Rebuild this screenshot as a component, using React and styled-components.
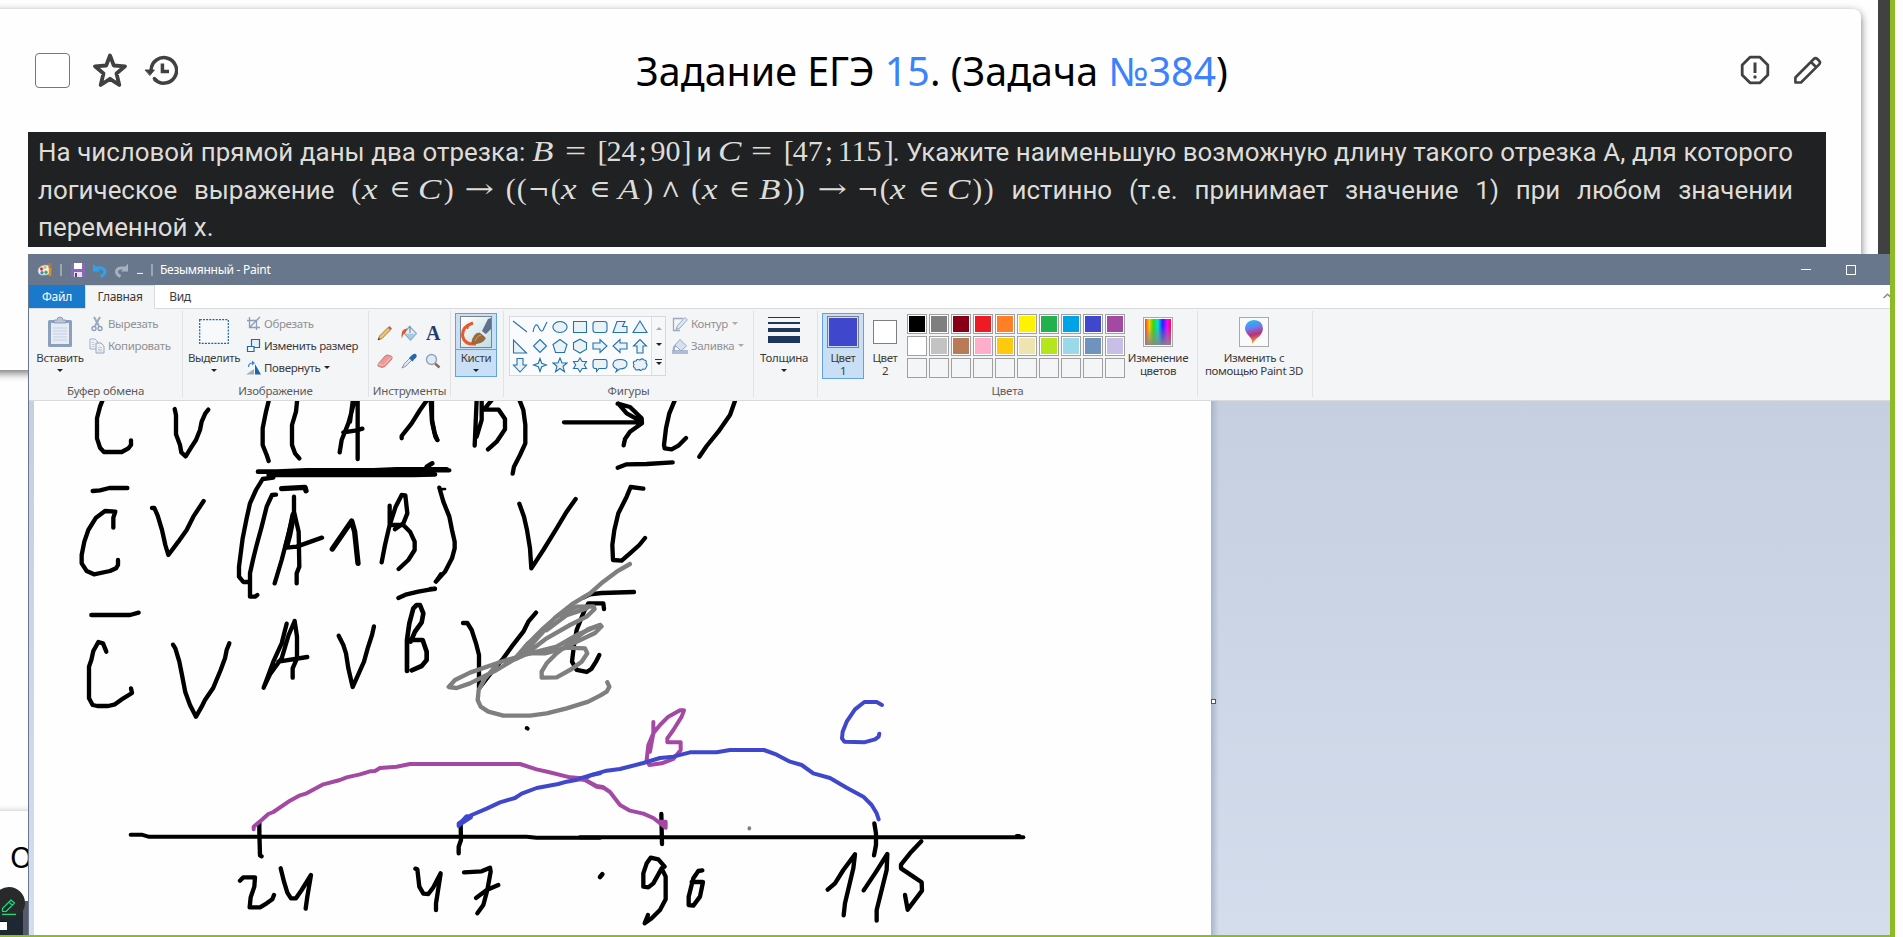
import React from 'react';
import styled, { createGlobalStyle } from 'styled-components';

const Global = createGlobalStyle`
  * { box-sizing: border-box; }
  body { margin: 0; background: #fefefe; overflow: hidden; font-family: "Noto Sans", "Open Sans", sans-serif; }
  svg { display: block; flex: none; }
`;

/* ---------- screen ---------- */
const Screen = styled.div`
  width: 1903px; height: 937px; overflow: hidden; background: #fefefe;
`;
const Shared = styled.div`
  width: 1895px; height: 937px; border-right: 5px solid #8dbb25; border-bottom: 2px solid #8dbb25;
  position: relative; overflow: hidden;
`;
const Page = styled.div`
  display: flex; height: 935px; background: #fefefe;
`;
const Content = styled.div`
  width: 1878px; overflow: hidden; display: flex; flex-direction: column; padding-top: 9px;
`;
const Scrollbar = styled.div`
  width: 12px; background: #414141;
`;
const Card = styled.section`
  width: 1881px; margin-left: -20px; flex: none; height: ${p => p.$h}px; margin-bottom: ${p => p.$gap || 0}px;
  border-radius: 8px; background: #fefefe;
  box-shadow: 0 3px 8px rgba(0,0,0,.55);
`;
const CardHead = styled.header`
  display: flex; align-items: center; height: 123px; padding: 0 38px 0 55px;
`;
const HeadIcons = styled.div`
  display: flex; align-items: center; gap: ${p => p.$gap}px; height: 35px; margin-top: -1px;
`;
const CheckBox = styled.span`
  width: 35px; height: 35px; border: 1.5px solid #777; border-radius: 4px; background: #fff; margin-right: 6px;
`;
const Title = styled.h1`
  flex: 1; margin: 0 54px 0 0; text-align: center; font-weight: 400; font-size: 39.4px; line-height: 52px; color: #000;
  white-space: nowrap;
`;
const Link = styled.a` color: #3b82ff; `;

const Problem = styled.div`
  width: 1798px; height: 115px; margin-left: 48px; background: #1f2122; color: #dedcd8;
  padding: 1px 33px 0 10px; font-family: Roboto, sans-serif; font-size: 25.9px;
`;
const Line = styled.div`
  height: ${p => p.$h}px; line-height: ${p => p.$h}px; white-space: nowrap; overflow: visible;
  text-align: justify; text-align-last: ${p => (p.$last ? 'left' : 'justify')};
`;
const Formula = styled.span`
  display: inline-flex; height: 36px; line-height: 36px; vertical-align: baseline; text-align-last: left;
  font-family: "Liberation Serif", serif; font-size: 30px;
`;
const Glyph = styled.span`
  width: ${p => p.$w}px; white-space: nowrap; transform-origin: 0 50%;
  ${p => p.$kind === 'v' && 'font-style: italic; transform: scaleX(1.17);'}
  ${p => p.$kind === 'e' && 'transform: scaleX(1.25);'}
  ${p => p.$kind === 'o' && 'font-family: "DejaVu Math TeX Gyre", "DejaVu Sans", serif; font-size: 24px;'}
  ${p => p.$kind === 'a' && 'font-family: "DejaVu Math TeX Gyre", "DejaVu Sans", serif; font-size: 24px; transform: scaleX(1.3);'}
`;

const formulaB = [['B', 33.5, 'v'], ['=', 32, 'e'], ['[', 9], ['24', 32], [';', 12], ['90', 31], [']', 8.5]];
const formulaC = [['C', 33, 'v'], ['=', 32.5, 'e'], ['[', 9], ['47', 32], [';', 13], ['115', 46], [']', 9]];
const formulaX = [
  ['(', 11], ['x', 28, 'v'], ['∈', 28, 'o'], ['C', 25.5, 'v'], [')', 20], ['→', 42, 'a'],
  ['(', 11], ['(', 12], ['¬', 22, 'o'], ['(', 10.5], ['x', 29, 'v'], ['∈', 28, 'o'], ['A', 25, 'v'], [')', 18], ['∧', 30, 'o'],
  ['(', 10.5], ['x', 28, 'v'], ['∈', 29, 'o'], ['B', 24.5, 'v'], [')', 11.5], [')', 22], ['→', 41, 'a'],
  ['¬', 22, 'o'], ['(', 10.5], ['x', 29, 'v'], ['∈', 28, 'o'], ['C', 25, 'v'], [')', 11.5], [')', 11],
];
const Expression = ({ parts }) => (
  <Formula>{parts.map(([t, w, k], i) => <Glyph key={i} $w={w} $kind={k}>{t}</Glyph>)}</Formula>
);

/* floating draw button in the corner */
const Answer = styled.div` padding: 26px 0 0 30px; font-size: 29.5px; line-height: 40px; height: 90px; color: #000; `;
const Dock = styled.div`
  width: 48px; height: 34px; background: #1e2832; border-right: 5px solid #545b66; padding: 20px 0 0 20px;
`;
const DockChip = styled.span` display: block; width: 7px; height: 9px; background: #fff; border-top: 1px solid #111; `;
const DrawButton = styled.button`
  position: absolute; left: -7px; top: 887px; width: 32px; height: 32px; border: 0; border-radius: 50%;
  background: #28292b; padding: 8px 0 0 8px;
`;

/* ---------- paint window ---------- */
const Window = styled.div`
  position: absolute; left: 28px; top: 254px; width: 1862px; height: 681px; border-left: 1px solid #68778b;
  display: flex; flex-direction: column; font-size: 11.5px; letter-spacing: -.35px; color: #3b3b3b; background: #f4f5f7;
`;
const TitleBar = styled.div`
  height: 31px; background: #68778b; color: #fff; display: flex; align-items: center; padding-left: 8px;
`;
const QuickIcon = styled.span` width: ${p => p.$w}px; display: flex; `;
const WinTitle = styled.span` flex: 1; font-size: 12px; line-height: 30px; letter-spacing: -.27px; `;
const Controls = styled.span` display: flex; align-items: center; gap: 35px; padding-right: 34px; `;
const MinGlyph = styled.i` width: 10px; height: 1px; background: #fff; `;
const MaxGlyph = styled.i` width: 10px; height: 10px; border: 1px solid #fff; `;
const Tabs = styled.div`
  height: 24px; background: #fff; border-bottom: 1px solid #d9dadb; display: flex; font-size: 12px; letter-spacing: -.3px;
`;
const Tab = styled.div`
  height: ${p => (p.$kind === 'active' ? 24 : 23)}px; width: ${p => p.$w}px; line-height: 24px; text-align: center;
  background: ${p => ({ file: '#1979ca', active: '#f4f5f7' }[p.$kind] || 'transparent')};
  color: ${p => (p.$kind === 'file' ? '#fff' : '#3b3b3b')};
  ${p => p.$kind === 'active' && 'border: 1px solid #dadbdc; border-bottom: 0; line-height: 22px;'}
`;
const Collapse = styled.span` margin-left: auto; padding-top: 8px; width: 7px; overflow: hidden; `;
const Ribbon = styled.div`
  height: 92px; border-bottom: 1px solid #d9dadb; background: #f4f5f7; display: flex; padding-top: 2px;
`;
const Group = styled.div`
  width: ${p => p.$w}px; height: 86px; border-right: 1px solid #e0e2e4; display: flex; flex-direction: column; flex: none;
`;
const Body = styled.div` height: 72px; display: flex; padding-left: ${p => p.$pl || 0}px; `;
const GroupLabel = styled.div` text-align: center; line-height: 15px; height: 14px; color: #5c5c5c; white-space: nowrap; letter-spacing: -.2px; `;
const Big = styled.div`
  width: ${p => p.$w}px; height: ${p => p.$h || 66}px; margin-top: 2px; display: flex; flex-direction: column; align-items: center; flex: none;
  white-space: nowrap; line-height: 13px; text-align: center;
  ${p => p.$on && 'background: #c9dff5; border: 1px solid #62a2e4;'}
`;
const BigPic = styled.div`
  height: ${p => (p.$on ? 36 : 37)}px; display: flex; align-items: center; justify-content: center; align-self: stretch;
  ${p => p.$split && 'border-bottom: 1px solid #62a2e4;'}
`;
const BigText = styled.div` padding-top: 1px; white-space: pre; `;
const Down = styled.i`
  width: 0; height: 0; border: 3px solid transparent; border-top: 3px solid ${p => p.$c || '#222'}; border-bottom: 0;
  margin: ${p => p.$m || '5px 0 0'};
`;
const List = styled.div` display: flex; flex-direction: column; padding-left: ${p => p.$pl}px; padding-top: 2px; `;
const Cmd = styled.div`
  height: 22px; display: flex; align-items: center; white-space: nowrap; line-height: 14px; padding-bottom: 1px;
  color: ${p => (p.$off ? '#909194' : '#3b3b3b')};
`;
const CmdIcon = styled.span` width: ${p => p.$w || 17}px; display: flex; `;
const ToolGrid = styled.div`
  display: grid; grid-template-columns: repeat(3, 24px); grid-auto-rows: 28px; padding: 8px 0 0 4px; align-items: center; justify-items: center;
`;
const ShapeBox = styled.div`
  width: 157px; height: 60px; margin-top: 5px; border: 1px solid #d6dade; background: #fafbfc; display: flex; flex: none;
`;
const ShapeGrid = styled.div`
  width: 142px; display: grid; grid-template-columns: repeat(7, 20px); grid-auto-rows: 19.3px; align-items: center; justify-items: center;
  border-right: 1px solid #dcdfe3;
`;
const ShapeScroll = styled.div`
  width: 13px; display: flex; flex-direction: column; align-items: center; background: #f6f7f8; justify-content: space-around; padding: 3px 0;
`;
const UpArrow = styled.i` width: 0; height: 0; border: 3px solid transparent; border-bottom: 3px solid #aaa; border-top: 0; `;
const MoreArrow = styled.span` border-top: 1px solid #333; padding-top: 2px; width: 7px; display: flex; justify-content: center; `;
const Bars = styled.div` width: 32px; display: flex; flex-direction: column; `;
const Bar = styled.i` height: ${p => p.$h}px; margin-bottom: 4px; background: #1f365c; `;
const Swatch = styled.div`
  width: ${p => p.$s}px; height: ${p => p.$s}px; border: 1px solid ${p => p.$b || '#7f7f7f'}; background: ${p => p.$c};
  box-shadow: inset 0 0 0 1px ${p => p.$in || '#fff'};
`;
const Palette = styled.div`
  display: grid; grid-template-columns: repeat(10, 20px); grid-auto-rows: 20px; gap: 2px; margin: 3px 0 0 1px; width: 218px; height: 64px; flex: none;
`;
const Framed = styled.div`
  width: 30px; height: 30px; border: 1px solid #a9a9a9; background: #fafafa; padding: 1px; display: flex;
`;
const Spectrum = styled.div`
  flex: 1; background: linear-gradient(to bottom, rgba(136,136,136,0) 25%, rgba(136,136,136,.9)), linear-gradient(to right, #f33, #fc0 16%, #3d0 32%, #0dd 50%, #22f 68%, #f0f 86%, #f04);
`;
const Work = styled.div`
  flex: 1; display: flex; padding-left: 5px; background: linear-gradient(#c5cfe0, #d4ddec);
`;
const Canvas = styled.div` width: 1177px; height: 534px; background: #fefefe; `;
const Edge = styled.div` width: 8px; background: linear-gradient(to right, #a9b6cb, transparent); position: relative; `;
const Handle = styled.i`
  position: absolute; left: 0; top: 298px; width: 5px; height: 5px; background: #fff; border: 1px solid #555;
`;

/* ---------- small icons ---------- */
const I = ({ w = 16, h = w, vb, children, ...r }) => (
  <svg width={w} height={h} viewBox={vb || `0 0 ${w} ${h}`} fill="none" {...r}>{children}</svg>
);
const StarIcon = () => (
  <I w={36} stroke="#414141" strokeWidth="3.8" strokeLinejoin="round">
    <path d="M18 3.5 L21.8 13.5 L33 14.3 L24.5 21.5 L27.3 33 L18 26.8 L8.7 33 L11.5 21.5 L3 14.3 L14.2 13.5 Z" />
  </I>
);
const HistoryIcon = () => (
  <I w={34} vb="0 0 36 36" stroke="#414141" strokeWidth="3.7" strokeLinecap="round">
    <path d="M7.5 18 A13.5 13.5 0 1 1 11 27.5" strokeLinecap="butt" /><path d="M11 27 a13 13 0 0 0 2 2" />
    <path d="M1.5 18 h9.5 l-4.6 5.5z" fill="#414141" strokeWidth="1" /><path d="M19.5 11 v8.5 h7" strokeLinecap="butt" />
  </I>
);
const AlertIcon = () => (
  <I w={30} stroke="#414141" strokeWidth="2.8">
    <path d="M10 2.2 H20 L27.8 10 V20 L20 27.8 H10 L2.2 20 V10 Z" strokeLinejoin="round" /><path d="M15 7.5 V18" strokeWidth="3" />
    <circle cx="15" cy="22" r="1.7" fill="#414141" stroke="none" />
  </I>
);
const EditIcon = () => (
  <I w={30} stroke="#414141" strokeWidth="2.6" strokeLinejoin="round">
    <path d="M2.4 27.5 V22.5 L20.8 4 Q22.5 2.2 24.3 4 L26.3 6 Q27.8 7.6 26.2 9.3 L8 27.5 Z M18 7 L23.3 12.2" />
  </I>
);

const quick = {
  app: <I><path d="M1 9 Q1 4 8 3 Q15 3 14 8 Q14 13 8 13 Q1 14 1 9" fill="#e9f1f6" stroke="#8faab8" strokeWidth=".6" /><circle cx="4.5" cy="7" r="1.7" fill="#d64538" /><circle cx="8" cy="5.2" r="1.5" fill="#e8b73c" /><circle cx="5" cy="10.7" r="1.6" fill="#3b82c9" /><circle cx="9" cy="10.3" r="1.7" fill="#49a94f" /><path d="M13 6 V14" stroke="#e48a23" strokeWidth="2.4" /><path d="M13 1 V6" stroke="#b57b3c" strokeWidth="3" /></I>,
  save: <I><path d="M1 1 H15 V15 H1Z" fill="#8a68b3" /><path d="M4 1 H12 V7 H4Z" fill="#fff" /><path d="M4 10 H12 V15 H4Z" fill="#e4def0" /><path d="M6 11 v4" stroke="#5d3d87" strokeWidth="2" /></I>,
  undo: <I><path d="M4 6 H9 Q13 6.5 13 10 Q12.5 13 8.5 14.5" stroke="#2fa2ec" strokeWidth="3" /><path d="M1 1.5 V9.5 H8Z" fill="#2fa2ec" /></I>,
  redo: <I><path d="M12 6 H8 Q3.5 6.5 3.5 10 Q4 13 7.5 14.5" stroke="#a5b1c1" strokeWidth="3" /><path d="M15 1.5 V9.5 H8Z" fill="#a5b1c1" /></I>,
  sep: <I w={2} h={12}><path d="M1 0V12" stroke="#b5bcc5" strokeWidth="1.4" /></I>,
  more: <I w={8}><path d="M1 7.5H7" stroke="#e9ecef" strokeWidth="1.2" /><path d="M.5 9.5H7.5L4 13.5Z" fill="#111" stroke="#e9ecef" strokeWidth=".6" /></I>,
};

const PasteIcon = () => <I w={26} h={32}><rect x="1" y="4" width="24" height="27" rx="1.5" fill="#8c9fbe" /><rect x="4" y="7" width="18" height="21" fill="#e6ecf5" /><path d="M6 12H20M6 15H20M6 18H20M6 21H20M6 24H20" stroke="#c3cfe1" /><path d="M7 7V4H10Q10 1 13 1Q16 1 16 4H19V7Z" fill="#b9c6da" stroke="#8193b1" strokeWidth=".8" /></I>;
const CutIcon = () => <I><path d="M5 1 L10 10 M11 1 L6 10" stroke="#9ba9bf" strokeWidth="2" /><circle cx="5" cy="12.5" r="2" stroke="#8fa0ba" strokeWidth="1.4" /><circle cx="11" cy="12.5" r="2" stroke="#8fa0ba" strokeWidth="1.4" /></I>;
const CopyIcon = () => <I><path d="M1 1 H6 L9 4 V11 H1Z" fill="#eef1f6" stroke="#a3b0c6" /><path d="M7 5 H12 L15 8 V15 H7Z" fill="#eef1f6" stroke="#97a6bf" /><path d="M3 4.5H5M3 6.5H5.5M3 8.5H5.5M9 9.5H13M9 11.5H13M9 13H13" stroke="#b6c1d3" strokeWidth=".8" /></I>;
const SelectIcon = () => <I w={30} h={25}><rect x=".7" y=".7" width="28.6" height="23.6" fill="#f7f9fb" stroke="#1466ae" strokeWidth="1.2" strokeDasharray="2 1.2" /></I>;
const CropIcon = () => <I><path d="M3.5 1 V11.5 H14 M1 4.5 H10.5 V14 M4 11 L14 1" stroke="#8e9db8" strokeWidth="1.3" /></I>;
const ResizeIcon = () => <I><path d="M5.5 1.5 H13.5 V9.5 H5.5Z" fill="#e6eff7" stroke="#1d6aaa" strokeWidth="1.2" /><path d="M1.5 8.5 H8 V13.5 H1.5Z" fill="#f8fafc" stroke="#1d6aaa" strokeWidth="1.2" /></I>;
const RotateIcon = () => <I><path d="M0 14.5 H8 V9Z" fill="#a8adb2" /><path d="M9 14.5 V4 L15 14.5Z" fill="#1b69ac" /><path d="M2.5 7 Q2.5 3 6.5 3" stroke="#2f8be0" strokeWidth="1.2" /><path d="M6 0.5 L9 3 L6 5.5Z" fill="#2f8be0" /></I>;
const PencilIcon = () => <I><path d="M1 15 L2.5 11 L11 2.5 L13.5 5 L5 13.5Z" fill="#ecc46e" stroke="#8a6a35" strokeWidth=".8" /><path d="M11 2.5 L12.5 1 L15 3.5 L13.5 5Z" fill="#d3545b" /><path d="M1 15 L1.8 12.8 L3.2 14.2Z" fill="#333" /></I>;
const FillIcon = () => <I><path d="M8.5 1.5 L15.5 8.5 L9.5 15 L3 8Z" fill="#e4eef7" stroke="#7fa9d2" strokeWidth="1.2" /><path d="M4.5 8.5 L15 8.8 L9.5 14.5Z" fill="#a9c9e6" /><path d="M9 8 V1" stroke="#777f8a" /><path d="M6.5 3.5 Q-1 4 .8 13.5 Q2 9 4.5 7.5Z" fill="#e05a2b" /></I>;
const EraserIcon = () => <I><path d="M1 11 L8 3 Q9 2 11 2 L15 3.5 L15 6 L8 13.5 L5 14.5 L1 13Z" fill="#ec9a97" stroke="#b9686b" strokeWidth=".8" /><path d="M1 11 L6 12.5 L15 3.5" stroke="#f7c5c0" /></I>;
const DropperIcon = () => <I><path d="M1 15 L3 11 L9 5 L11 7 L5 13Z" fill="#dceaf5" stroke="#6e7f90" strokeWidth=".8" /><path d="M8 5 L10 3 Q14 -1 15.5 2 Q16.5 4 13 6.5 L11.5 8.5Z" fill="#2468ad" /></I>;
const LensIcon = () => <I><path d="M10 10.5 L14.5 14.5" stroke="#8a6b55" strokeWidth="2.4" /><circle cx="6.5" cy="6.5" r="5" fill="#dcebf8" stroke="#95a2b2" strokeWidth="1.4" /></I>;
const TextTool = styled.span` font: bold 20px/18px "Liberation Serif", serif; color: #1f3f6b; `;
const BrushIcon = () => <I w={32}><defs><linearGradient id="bg" x1="0" y1="0" x2="1" y2="1"><stop stopColor="#fff" /><stop offset="1" stopColor="#bddfe6" /></linearGradient></defs><rect x=".5" y=".5" width="31" height="31" fill="url(#bg)" stroke="#7c838b" /><path d="M13 7 Q1 11 2.8 21 Q5 29 16 28" stroke="#e9592a" strokeWidth="3" /><path d="M12 6.5 Q8 9 7.5 13" stroke="#e9592a" strokeWidth="1.6" /><path d="M21 17 L28 3 L31 2 V13 L25 19Z" fill="#5f7289" /><path d="M11 28 Q13 16 20 16.5 Q26 18 25.5 23 Q22 29 11 28Z" fill="#9a6a3c" /><path d="M15 25 Q17 20 21 19" stroke="#c59663" strokeWidth="1.2" /><path d="M20 15 L26.5 20.5" stroke="#e4eaf0" strokeWidth="2.6" /></I>;
const OutlineIcon = () => <I><path d="M11 2.5 H1.5 V14.5 H8" stroke="#9aa8c0" strokeWidth="1.3" /><path d="M4 13.5 L5.5 9.5 L13 1.5 L15.3 3.8 L8 12Z" fill="#e0e6ef" stroke="#9aa8c0" /></I>;
const FillCmdIcon = () => <I><path d="M0 12 H16 V16 H0Z" fill="#aebdd6" /><path d="M8 1.5 L14.5 8 L9 13 L3 7Z" fill="#d8e0ec" stroke="#98a8c3" /><path d="M4 8 Q1 8 2 13" stroke="#98a8c3" strokeWidth="2" /></I>;
const Paint3D = () => <svg width="26" height="26" viewBox="0 0 26 26"><defs><linearGradient id="p3" x1="0.2" y1="0" x2=".4" y2="1"><stop stopColor="#17c6ea" /><stop offset=".35" stopColor="#6a7cf2" /><stop offset=".65" stopColor="#c0306f" /><stop offset="1" stopColor="#f9b233" /></linearGradient></defs><path d="M13 1 Q22 1.5 22 10 Q21 16 15 20 L11 25 Q12 21 8 17 Q4 13 4 9 Q5 1.5 13 1Z" fill="url(#p3)" /></svg>;

const shapes = [
  'M1 2L15 13', 'M1 13Q3 3 6 7Q10 16 12 9L15 3', 'M8 2.5A7 5.5 0 1 1 7.99 2.5Z', 'M1.5 2.5H14.5V13.5H1.5Z',
  'M4 2.5H12Q15 2.5 15 5V11Q15 13.5 12 13.5H4Q1 13.5 1 11V5Q1 2.5 4 2.5Z', 'M5 2.5H13L10.5 7.5H15V13.5H1Z', 'M8 2L15 13.5H1Z',
  'M1.5 2V15H14.5Z', 'M8 1.5L14.5 8L8 14.5L1.5 8Z', 'M8 1.5L15 6.5L12.5 14.5H3.5L1 6.5Z', 'M8 1.2L14.5 4.7V11.3L8 15L1.5 11.3V4.7Z',
  'M1 5H8V1.5L15 8L8 14.5V11H1Z', 'M15 5H8V1.5L1 8L8 14.5V11H15Z', 'M5 15V8H1.5L8 1.5L14.5 8H11V15Z',
  'M5 1.5V8H1.5L8 15L14.5 8H11V1.5Z', 'M8 1.5L9.7 6.3L14.5 8L9.7 9.7L8 14.5L6.3 9.7L1.5 8L6.3 6.3Z',
  'M8 1L10 6H15L11 9.3L12.5 14.8L8 11.5L3.5 14.8L5 9.3L1 6H6Z', 'M8 1L10.2 4.5H14.5L12.3 8L14.5 11.5H10.2L8 15L5.8 11.5H1.5L3.7 8L1.5 4.5H5.8Z',
  'M3 2.5H13Q15 2.5 15 5V9Q15 11.5 13 11.5H7L4.5 14.5V11.5H3Q1 11.5 1 9V5Q1 2.5 3 2.5Z', 'M5 12Q1 10.5 1 7.2Q1.5 2.5 8 2.5Q15 2.5 15 7Q15 12 7.5 12L4 14.8Z',
  'M4 4Q5 1.5 8 3Q10 .7 12 3Q15 3 14 6Q16 8 14 10.5Q13.5 13 11 12Q9 14.5 7 12.5Q3 14 3 11.2Q.5 10 2 7.5Q0 4 4 4Z',
];

const row1 = ['#000000', '#7f7f7f', '#880015', '#ed1c24', '#ff7f27', '#fff200', '#22b14c', '#00a2e8', '#3f48cc', '#a349a4'];
const row2 = ['#ffffff', '#c3c3c3', '#b97a57', '#ffaec9', '#ffc90e', '#efe4b0', '#b5e61d', '#99d9ea', '#7092be', '#c8bfe7'];

/* ---------- hand-drawn strokes, each sheet in thirds of a pixel ---------- */
const K = '#000', G = '#7f7f7f', P = '#a349a4', B = '#3f48cc';
const sheets = [
  { at: [20, 395], strokes: [
    [K, 'M250 10L240 35L231 70V130L240 158L252 171H305L325 160L333 150V136'],
    [K, 'M464 42L468 60V118L480 150L484 172L497 184L515 155L528 135L540 105L545 80L556 55L565 44'],
    [K, 'M748 10L738 50L728 100V150L740 180L746 198'], [K, 'M832 10L828 50L816 90V150L825 175L838 190'],
    [K, 'M1004 14L995 50L985 85L965 135L959 172M1013 14V192M998 20L990 80M970 112L1010 106L1027 101'],
    [K, 'M1222 14L1200 45L1175 85L1145 123V130M1236 14V80L1243 112L1252 135'],
    [K, 'M714 230H770L860 226H1060L1130 223H1280M746 240L800 240H1180L1245 238M1220 215L1237 205M780 235H1240', 14],
    [K, 'M760 248L728 252L708 285L690 325L680 370L668 430L657 515V545L670 561H685'],
    [K, 'M768 299L756 300L740 335L725 395L710 450L700 490L690 535V605H705L712 600'],
    [K, 'M218 288L240 286L268 279H322'],
    [K, 'M280 398V368L286 350L255 348L228 368L205 405L193 440L185 480V505L200 528L222 538L270 528L288 520L294 510V495'],
    [K, 'M396 339H403L413 362L426 405L436 450L445 480L475 440L500 405L520 365L551 318'],
    [K, 'M785 281L855 277L858 287', 16],
    [K, 'M822 305V350L802 430L785 495L764 565M822 350L836 410L838 515L830 535V565M800 458L830 455L906 428'],
    [K, 'M820 360L808 420L800 450', 18],
    [K, 'M937 462L995 378L1004 410L1014 505', 16],
    [K, 'M1109 332V390L1095 450L1085 502M1109 390L1127 335L1145 300L1156 301L1162 355L1150 385L1125 403M1115 390H1150L1170 410L1184 440V465L1165 495L1136 522'],
    [K, 'M1275 282L1258 283M1245 560L1262 535', 8],
    [K, 'M1135 609L1160 598L1195 590L1245 581'],
    [K, 'M214 660H330L356 653'],
    [K, 'M259 770L249 745L235 741L220 768L214 795L207 815V910L218 930L232 933H265L285 928L310 910L336 894L333 880'],
    [K, 'M459 749L466 760L478 800L486 840L496 892L510 930L528 965L545 935L555 915L580 878L602 825L615 790L620 765L628 745'],
    [K, 'M800 686L785 745L760 800L731 878M824 678L806 720L785 790L750 838L731 878M824 678L831 725V790L818 820V848M775 800L862 786'],
    [K, 'M956 722L970 750L978 775L985 820L998 876L1012 845L1032 800L1043 760L1056 720L1062 694'],
    [K, 'M1161 828V735L1168 685L1180 640L1190 630H1200L1210 655L1205 682L1185 710L1172 740M1172 735H1208L1220 770V795L1205 813L1175 826', 14],
  ] },
  { at: [430, 395], strokes: [
    [K, 'M2 16L6 75L16 125L22 135M2 226H58'],
    [K, 'M140 14L134 152M155 14V75L140 125M186 14L162 44H206L225 72V103L200 140L174 163'],
    [K, 'M268 14L280 45L286 90V145L270 180L252 215L248 236'],
    [K, 'M402 82H635M563 26L600 36L635 70L636 85L600 110L585 132L581 151M565 26L590 55L635 80'],
    [K, 'M736 12L718 55L708 100L702 150L704 160L725 163L745 152L768 129'],
    [K, 'M917 12L900 60L865 110L830 153L808 185'],
    [K, 'M563 218L590 208L650 207L728 202'],
    [K, 'M28 278L40 320L58 365L66 405L74 440V460L66 490L45 530L18 560'],
    [K, 'M268 326L282 365L291 405L300 460L304 520L340 465L380 400L410 350L437 312'],
    [K, 'M640 281L602 276L590 305L565 355L553 405L547 450L549 495L575 497L600 475L628 450L645 429'],
    [K, 'M2 582H14'],
    [K, 'M460 608L480 598L515 594L612 591'],
    [K, 'M99 684H112L125 705L138 745L147 780V880L190 825L220 790L245 755L280 710L295 680L318 653'],
    [K, 'M522 642L520 625H475L462 650L440 705L432 750L426 800L440 825L470 831L484 822L498 800L508 780'],
    [G, 'M600 507L560 530L520 560L480 595L430 625L375 668L340 710L290 765L260 790L290 750L340 700L380 665L440 635L490 634L494 642L470 665L420 690L350 730L295 772'],
    [G, 'M350 705L410 660L470 640M295 745L260 785', 14],
    [G, 'M295 775L345 775L410 758L465 760L472 775L455 800L425 822L380 847L335 848V830L350 805L380 775L430 735L475 702L510 690L515 694L495 714L430 745L380 768'],
    [G, 'M510 690L440 720L380 755L300 775L220 798L120 833L75 855L56 876L80 879L120 865L200 825L250 795L295 775M200 810L165 850L146 885L143 915L152 935L175 950L220 962H300L350 955L410 940L475 920L510 902L530 890L538 875L532 862'],
    [K, 'M290 999L293 1001', 12],
  ] },
  { at: [100, 690], strokes: [
    [K, 'M92 434H125L145 440H1280L1310 443H1500', 12],
    [K, 'M478 398V425L480 496L485 499'], [K, 'M1082 405L1083 450L1076 470V490'],
    [K, 'M420 572L430 562H465L463 590L452 622L449 652H480L500 640L517 628L522 615'],
    [K, 'M542 535L552 575L562 608L573 625H588L605 600L633 555L622 620L617 656'],
    [K, 'M946 536L952 538L958 590L970 611L985 612L1000 592L1022 550L1012 615L1008 640V660'],
    [K, 'M1092 547L1145 544L1170 533L1172 545L1162 600L1150 645L1132 670M1128 624L1160 600L1195 585'],
    [P, 'M461 418V410L485 390L505 372L520 366L570 332L600 316L620 310L670 283L720 270L740 262L780 253L810 244L825 243L840 234L890 230L930 222H1260L1310 238L1345 246L1410 262L1445 265L1465 275L1490 290L1510 293', 12],
    [B, 'M1076 408V400L1115 375L1160 356L1200 337L1245 324L1265 311L1310 294L1375 282L1400 275L1455 265L1475 255L1500 250', 12],
    [B, 'M1080 402L1100 380L1112 381Z', 14],
  ] },
  { at: [580, 690], strokes: [
    [K, 'M0 442H1330', 12], [K, 'M1310 438H1318', 12], [K, 'M244 372L246 462'], [K, 'M883 400L888 430V465L882 496'],
    [K, 'M60 561L67 553', 14],
    [K, 'M254 530L235 508L212 503L200 520L190 550V590L205 592L220 580L245 535L257 560V628L240 660L215 685L194 700L204 675'],
    [K, 'M367 541L355 543L340 565L326 620V645L340 647L360 620L369 576H335'],
    [K, 'M743 599L765 580L790 540L825 493L820 535L795 640L791 676'],
    [K, 'M851 601L885 550L922 492L920 540L905 600L890 660V692'],
    [K, 'M1024 454L990 490L963 524V535L1000 560L1025 577L1026 602L983 659L975 615'],
    [G, 'M508 414V416', 11],
    [P, 'M0 268L15 270L50 288L68 291L90 306L120 345L150 362L190 371L220 384L257 413V395L235 395', 12],
    [P, 'M220 96V130L205 165L200 210L208 225L245 220L280 207L302 180V157H262V145L280 120L305 80L312 61H300L265 80L240 105L220 130L210 185', 12],
    [B, 'M0 265L30 256L80 242L120 237L190 219L240 204L280 200L330 187H410L450 180H552L590 194L630 215L665 225L700 250L750 264L800 293L850 320L875 345L890 370L896 388', 12],
    [B, 'M906 45L890 36H853L825 58L800 95L788 125L786 145L793 155L852 157L885 148L896 140L898 131', 12],
  ] },
];

const Drawing = () => (
  <svg width="1177" height="534" viewBox="34 401 1177 534" fill="none" strokeLinecap="round" strokeLinejoin="round">
    {[false, true].map(colored => sheets.map((s, i) => (
      <g key={`${colored}${i}`} transform={`translate(${s.at[0]} ${s.at[1]}) scale(.33333)`}>
        {s.strokes.filter(k => (k[0] === P || k[0] === B) === colored).map(([c, d, w], j) => (
          <path key={j} d={d} stroke={c} strokeWidth={w || 13} />
        ))}
      </g>
    )))}
  </svg>
);

export default function App() {
  return (
    <Screen>
      <Global />
      <Shared>
        <Page>
          <Content>
            <Card $h={361} $gap={441}>
              <CardHead>
                <HeadIcons $gap={16}><CheckBox /><StarIcon /><HistoryIcon /></HeadIcons>
                <Title>Задание ЕГЭ <Link>15</Link>. (Задача <Link>№384</Link>)</Title>
                <HeadIcons $gap={23}><AlertIcon /><EditIcon /></HeadIcons>
              </CardHead>
              <Problem>
                <Line $h={38}>На числовой прямой даны два отрезка: <Expression parts={formulaB} /> и <Expression parts={formulaC} />. Укажите наименьшую возможную длину такого отрезка А, для которого</Line>
                <Line $h={38}>логическое выражение <Expression parts={formulaX} /> истинно (т.е. принимает значение 1) при любом значении</Line>
                <Line $h={36} $last>переменной x.</Line>
              </Problem>
            </Card>
            <Card $h={140}>
              <Answer>О</Answer>
              <Dock><DockChip /></Dock>
            </Card>
          </Content>
          <Scrollbar />
        </Page>
        <DrawButton>
          <I w={16} stroke="#12e07c" strokeWidth="1.2" strokeLinejoin="round"><path d="M1.5 12.5V9.5L10 1L13.5 4L5 12.5ZM8 3L11.5 6.5M1 15.3H15" /></I>
        </DrawButton>

        <Window>
          <TitleBar>
            <QuickIcon $w={23}>{quick.app}</QuickIcon><QuickIcon $w={10}>{quick.sep}</QuickIcon>
            <QuickIcon $w={22}>{quick.save}</QuickIcon><QuickIcon $w={21}>{quick.undo}</QuickIcon>
            <QuickIcon $w={23}>{quick.redo}</QuickIcon><QuickIcon $w={15}>{quick.more}</QuickIcon>
            <QuickIcon $w={9}>{quick.sep}</QuickIcon>
            <WinTitle>Безымянный - Paint</WinTitle>
            <Controls><MinGlyph /><MaxGlyph /></Controls>
          </TitleBar>
          <Tabs>
            <Tab $kind="file" $w={56}>Файл</Tab><Tab $kind="active" $w={70}>Главная</Tab><Tab $w={50}>Вид</Tab>
            <Collapse><I w={10} h={6} stroke="#888" strokeWidth="1.4"><path d="M.5 5L4.5 1.2L8.5 5" /></I></Collapse>
          </Tabs>
          <Ribbon>
            <Group $w={154}>
              <Body $pl={6}>
                <Big $w={50}><BigPic><PasteIcon /></BigPic><BigText>Вставить</BigText><Down /></Big>
                <List $pl={4}>
                  <Cmd $off><CmdIcon $w={19}><CutIcon /></CmdIcon>Вырезать</Cmd>
                  <Cmd $off><CmdIcon $w={19}><CopyIcon /></CmdIcon>Копировать</Cmd>
                </List>
              </Body>
              <GroupLabel>Буфер обмена</GroupLabel>
            </Group>
            <Group $w={186}>
              <Body $pl={5}>
                <Big $w={52}><BigPic><SelectIcon /></BigPic><BigText>Выделить</BigText><Down /></Big>
                <List $pl={6}>
                  <Cmd $off><CmdIcon $w={18}><CropIcon /></CmdIcon>Обрезать</Cmd>
                  <Cmd><CmdIcon $w={18}><ResizeIcon /></CmdIcon>Изменить размер</Cmd>
                  <Cmd><CmdIcon $w={18}><RotateIcon /></CmdIcon>Повернуть<Down $m="0 0 0 4px" /></Cmd>
                </List>
              </Body>
              <GroupLabel>Изображение</GroupLabel>
            </Group>
            <Group $w={82}>
              <Body>
                <ToolGrid><PencilIcon /><FillIcon /><TextTool>A</TextTool><EraserIcon /><DropperIcon /><LensIcon /></ToolGrid>
              </Body>
              <GroupLabel>Инструменты</GroupLabel>
            </Group>
            <Group $w={53}>
              <Body $pl={4}>
                <Big $w={42} $h={64} $on><BigPic $on $split><BrushIcon /></BigPic><BigText>Кисти</BigText><Down /></Big>
              </Body>
            </Group>
            <Group $w={250}>
              <Body $pl={5}>
                <ShapeBox>
                  <ShapeGrid>
                    {shapes.map((d, i) => <I key={i} stroke="#2471ad" strokeWidth="1.1"><path d={d} fill={i < 2 ? 'none' : '#e8f2f7'} /></I>)}
                  </ShapeGrid>
                  <ShapeScroll><UpArrow /><Down $m="0" /><MoreArrow><Down $m="0" /></MoreArrow></ShapeScroll>
                </ShapeBox>
                <List $pl={6}>
                  <Cmd $off><CmdIcon $w={19}><OutlineIcon /></CmdIcon>Контур<Down $c="#aaa" $m="0 0 0 4px" /></Cmd>
                  <Cmd $off><CmdIcon $w={19}><FillCmdIcon /></CmdIcon>Заливка<Down $c="#aaa" $m="0 0 0 4px" /></Cmd>
                </List>
              </Body>
              <GroupLabel>Фигуры</GroupLabel>
            </Group>
            <Group $w={64}>
              <Body $pl={4}>
                <Big $w={52}>
                  <BigPic><Bars><Bar $h={1} /><Bar $h={2} /><Bar $h={4} /><Bar $h={7} /></Bars></BigPic>
                  <BigText>Толщина</BigText><Down />
                </Big>
              </Body>
            </Group>
            <Group $w={380}>
              <Body $pl={4}>
                <Big $w={42} $on><BigPic $on><Swatch $s={32} $c="#3f48cc" $in="#c9dff5" /></BigPic><BigText>{'Цвет\n1'}</BigText></Big>
                <Big $w={42}><BigPic><Swatch $s={24} $c="#fff" /></BigPic><BigText>{'Цвет\n2'}</BigText></Big>
                <Palette>
                  {row1.concat(row2).map((c, i) => <Swatch key={i} $s={20} $c={c} $b="#a0a0a0" />)}
                  {row1.map((_, i) => <Swatch key={i} $s={20} $c="#f4f5f7" $b="#a0a0a0" $in="#f4f5f7" />)}
                </Palette>
                <Big $w={66}><BigPic><Framed><Spectrum /></Framed></BigPic><BigText>{'Изменение\nцветов'}</BigText></Big>
              </Body>
              <GroupLabel>Цвета</GroupLabel>
            </Group>
            <Group $w={115}>
              <Body $pl={4}>
                <Big $w={104}><BigPic><Framed><Paint3D /></Framed></BigPic><BigText>{'Изменить с\nпомощью Paint 3D'}</BigText></Big>
              </Body>
            </Group>
          </Ribbon>
          <Work>
            <Canvas><Drawing /></Canvas>
            <Edge><Handle /></Edge>
          </Work>
        </Window>
      </Shared>
    </Screen>
  );
}
